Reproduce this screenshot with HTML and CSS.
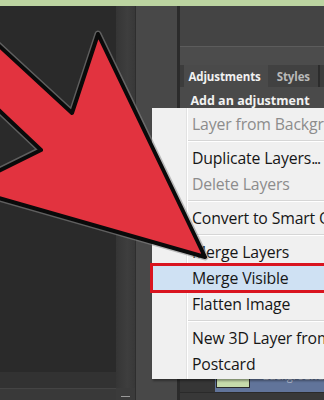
FILE: index.html
```html
<!DOCTYPE html>
<html>
<head>
<meta charset="utf-8">
<link rel="stylesheet" href="styles.css">
</head>
<body>
<div class="topbar"></div>
<div class="workspace">
  <div class="canvas">
    <div class="canvas-main"></div>
    <div class="canvas-foot"></div>
    <div class="canvas-base"></div>
  </div>
  <div class="scroll">
    <div class="scroll-main"></div>
    <div class="scroll-base"><span class="dash"></span></div>
  </div>
  <div class="dock"></div>
  <div class="divider"></div>
  <div class="panel">
    <div class="panel-top"></div>
    <div class="panel-strip"></div>
    <div class="tabs">
      <div class="tab active">Adjustments</div>
      <div class="tab">Styles</div>
      <div class="tab-sep"></div>
    </div>
    <div class="panel-body">
      <div class="panel-title">Add an adjustment</div>
    </div>
    <div class="layers-row">
      <div class="eye-col"></div>
      <div class="layer-sel">
        <div class="thumb"></div>
        <div class="layer-name">Background</div>
      </div>
    </div>
    <div class="layers-foot"></div>
  </div>
</div>

<div class="menu">
  <div class="item disabled">Layer from Background<span class="dots">...</span></div>
  <div class="sep"></div>
  <div class="item">Duplicate Layers<span class="dots">...</span></div>
  <div class="item disabled">Delete Layers</div>
  <div class="sep"></div>
  <div class="item">Convert to Smart Object</div>
  <div class="sep"></div>
  <div class="item">Merge Layers</div>
  <div class="item hl">Merge Visible</div>
  <div class="item">Flatten Image</div>
  <div class="sep"></div>
  <div class="item">New 3D Layer from File<span class="dots">...</span></div>
  <div class="item">Postcard</div>
</div>

<svg class="arrow" viewBox="0 0 324 400" width="324" height="400">
  <polygon points="-30,19 72,113 98,34 205,257 -36,188 41,150 -30,83" fill="none" stroke="#8a8a8a" stroke-opacity="0.55" stroke-width="7" stroke-linejoin="round"/>
  <polygon points="-30,19 72,113 98,34 205,257 -36,188 41,150 -30,83" fill="#e2333f" stroke="#0a0a0a" stroke-width="4" stroke-linejoin="round"/>
</svg>
</body>
</html>
```
FILE: styles.css
```css
html, body {
  margin: 0;
  padding: 0;
}
body {
  width: 324px;
  height: 400px;
  overflow: hidden;
  position: relative;
  background: #2a2a2a;
  font-family: "Open Sans", "Noto Sans", sans-serif;
}
.topbar {
  height: 6px;
  background: #bcd4a1;
}
.workspace {
  display: flex;
  height: 394px;
}
.canvas {
  width: 117px;
  display: flex;
  flex-direction: column;
}
.canvas-main {
  flex: 1;
  background: #2a2a2a;
}
.canvas-foot {
  height: 16px;
  background: #323232;
}
.canvas-base {
  height: 11px;
  background: #393939;
  border-top: 1px solid #444;
}
.scroll {
  width: 19px;
  display: flex;
  flex-direction: column;
}
.scroll-main {
  flex: 1;
  background: linear-gradient(to right, #353535, #3e3e3e 60%, #383838);
}
.scroll-base {
  height: 12px;
  background: #3b3b3b;
  display: flex;
  align-items: flex-end;
  justify-content: center;
  padding-bottom: 3px;
  box-sizing: border-box;
}
.dash {
  width: 9px;
  height: 1px;
  background: #9a9a9a;
}
.dock {
  width: 42px;
  background: #484848;
  border-left: 1px solid #2e2e2e;
}
.divider {
  width: 3px;
  background: #2b2b2b;
}
.panel {
  flex: 1;
  display: flex;
  flex-direction: column;
  background: #474747;
}
.panel-top {
  height: 40px;
  background: #444;
  border-bottom: 1px solid #5c5c5c;
}
.panel-strip {
  height: 18px;
  background: #4c4c4c;
}
.tabs {
  height: 22px;
  display: flex;
  align-items: stretch;
  background: #3c3c3c;
  padding-left: 4px;
}
.tab {
  font-size: 11.5px;
  font-weight: 700;
  color: #b9b9b9;
  display: flex;
  align-items: center;
  background: #414141;
  letter-spacing: -0.1px;
}
.tab.active {
  background: #4a4a4a;
  color: #f2f2f2;
  padding-left: 4px;
  padding-right: 7px;
}
.tab + .tab {
  padding-left: 9px;
  padding-right: 8px;
}
.tab-sep {
  width: 2px;
  background: #2c2c2c;
}
.panel-body {
  flex: 1;
  background: #4a4a4a;
  padding: 5px 0 0 10px;
}
.panel-title {
  font-size: 12.5px;
  font-weight: 700;
  color: #f2f2f2;
  line-height: 18px;
}
.layers-row {
  height: 21px;
  display: flex;
}
.eye-col {
  width: 35px;
  background: #363636;
}
.layer-sel {
  flex: 1;
  background: #61749a;
  display: flex;
  align-items: flex-start;
}
.thumb {
  width: 34px;
  height: 17px;
  margin-left: 1px;
  background: #c6dbab;
  border: 1px solid #2a2a2a;
  box-sizing: border-box;
}
.layer-name {
  font-size: 11px;
  line-height: 14px;
  color: #b4bdcf;
  margin-left: 12px;
  margin-top: -2px;
}
.layers-foot {
  height: 7px;
  background: #383838;
  border-top: 1px solid #2a2a2a;
}

.menu {
  position: absolute;
  left: 152px;
  top: 108px;
  width: 200px;
  padding: 3px 0 2px 0;
  background: #f0f0f0;
  box-shadow: 1px 2px 2px rgba(0,0,0,0.35);
  background-image: linear-gradient(to right, transparent 34px, #e2e2e2 34px, #e2e2e2 35px, #ffffff 35px, #ffffff 36px, transparent 36px);
}
.item {
  height: 26px;
  line-height: 26px;
  padding-left: 40px;
  font-size: 15.8px;
  color: #161616;
  white-space: nowrap;
  letter-spacing: -0.15px;
}
.dots {
  letter-spacing: -1.2px;
}
.item.disabled {
  color: #8c8c8c;
}
.item.hl {
  background: #cfe1f3;
  outline: 3px solid #d9141f;
  outline-offset: -1px;
  position: relative;
}
.sep {
  height: 8px;
  margin-left: 36px;
  background: linear-gradient(to bottom, transparent 3px, #d6d6d6 3px, #d6d6d6 4px, #ffffff 4px, #ffffff 5px, transparent 5px);
}
.arrow {
  position: absolute;
  left: 0;
  top: 0;
  pointer-events: none;
}
```
